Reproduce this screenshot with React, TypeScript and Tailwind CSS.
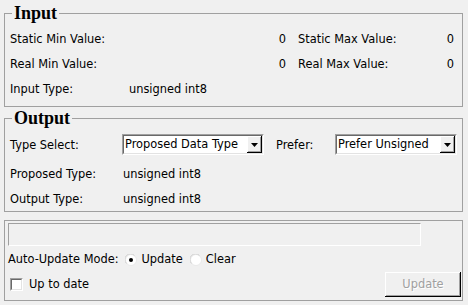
import React from 'react';

const ui = "font-['DejaVu_Sans',sans-serif] text-[11.4px] text-black";

function Group({ title, className = '', children }: { title?: string; className?: string; children: React.ReactNode }) {
  return (
    <fieldset className={`w-[459px] border border-[#a0a0a0] ${className}`}>
      {title && (
        <legend className="ml-[7px] px-[2px] font-['Liberation_Serif',serif] text-[18px] font-bold leading-[18px]">
          {title}
        </legend>
      )}
      {children}
    </fieldset>
  );
}

function Combo({ value, width }: { value: string; width: string }) {
  // classic sunken combobox with raised drop button
  return (
    <div className={`${width} h-[21px] border border-t-[#a0a0a0] border-l-[#a0a0a0] border-r-white border-b-white`}>
      <div className="flex h-full border border-t-[#696969] border-l-[#696969] border-r-[#e3e3e3] border-b-[#e3e3e3] bg-white">
        <div className="flex flex-1 items-center pl-[1px] pt-[1px] whitespace-nowrap overflow-hidden">{value}</div>
        <div className="flex w-[15px] items-center justify-center bg-[#f0f0f0] shadow-[inset_-1px_-1px_0_#000,inset_1px_1px_0_#fff,inset_-2px_-2px_0_#a0a0a0]">
          <svg width="7" height="4" viewBox="0 0 7 4" className="mt-[1px]">
            <path d="M0 0H7L3.5 4Z" fill="#000" />
          </svg>
        </div>
      </div>
    </div>
  );
}

function Radio({ checked }: { checked?: boolean }) {
  return (
    <svg width="12" height="12" viewBox="0 0 12 12">
      <circle cx="6" cy="6" r="5.5" fill="#fff" stroke="#e8e8e8" />
      <path d="M1.5 9.5A5 5 0 0 1 9.5 1.5" fill="none" stroke="#d0d0d0" />
      {checked && <circle cx="6" cy="6" r="2" fill="#000" />}
    </svg>
  );
}

export default function App() {
  return (
    <div className={`${ui} w-[468px] h-[305px] bg-[#f0f0f0] px-[4px] pt-[4px] flex flex-col`}>
      <Group title="Input" className="pb-[5px]">
        <div className="pt-[4px] pl-[5px] pr-[8px]">
          <div className="flex h-[25px] items-center pt-[2px]">
            <div className="w-[119px]">Static Min Value:</div>
            <div className="w-[157px] text-right">0</div>
            <div className="ml-[12px] flex-1">Static Max Value:</div>
            <div className="text-right">0</div>
          </div>
          <div className="flex h-[25px] items-center pt-[2px]">
            <div className="w-[119px]">Real Min Value:</div>
            <div className="w-[157px] text-right">0</div>
            <div className="ml-[12px] flex-1">Real Max Value:</div>
            <div className="text-right">0</div>
          </div>
          <div className="flex h-[25px] items-center pt-[2px]">
            <div className="w-[119px]">Input Type:</div>
            <div>unsigned int8</div>
          </div>
        </div>
      </Group>

      <Group title="Output" className="mt-[2px]">
        <div className="pl-[5px]">
          <div className="mt-[7px] flex h-[21px] items-center">
            <div className="w-[112px] pt-[2px]">Type Select:</div>
            <Combo value="Proposed Data Type" width="w-[142px]" />
            <div className="ml-[12px] w-[59px] pt-[2px]">Prefer:</div>
            <Combo value="Prefer Unsigned" width="w-[122px]" />
          </div>
          <div className="mt-[6px] flex h-[25px] items-center pt-[2px]">
            <div className="w-[113px]">Proposed Type:</div>
            <div>unsigned int8</div>
          </div>
          <div className="flex h-[25px] items-center pt-[2px]">
            <div className="w-[113px]">Output Type:</div>
            <div>unsigned int8</div>
          </div>
        </div>
      </Group>

      <Group className="mt-[8px] pb-[3px]">
        <div className="pl-[3px] pr-[1px]">
          <div className="mt-[2px] h-[23px] w-[413px] border border-t-[#a0a0a0] border-l-[#a0a0a0] border-r-white border-b-white bg-[#f0f0f0]" />
          <div className="flex h-[26px] items-center pt-[1px]">
            <span>Auto-Update Mode:</span>
            <span className="ml-[6px] flex items-center"><Radio checked /></span>
            <span className="ml-[5px]">Update</span>
            <span className="ml-[7px] flex items-center"><Radio /></span>
            <span className="ml-[4px]">Clear</span>
          </div>
          <div className="flex h-[25px] items-center">
            <div className="ml-[2px] h-[13px] w-[13px] border border-t-[#a0a0a0] border-l-[#a0a0a0] border-r-white border-b-white">
              <div className="h-full w-full border border-t-[#696969] border-l-[#696969] border-r-[#e3e3e3] border-b-[#e3e3e3] bg-white" />
            </div>
            <span className="ml-[6px] flex-1 pt-[1px]">Up to date</span>
            <button
              disabled
              className="h-[25px] w-[76px] bg-[#f0f0f0] pt-[1px] text-[#a0a0a0] [text-shadow:1px_1px_0_#fff] shadow-[inset_-1px_-1px_0_#000,inset_1px_1px_0_#fff,inset_-2px_-2px_0_#a0a0a0]"
            >
              Update
            </button>
          </div>
        </div>
      </Group>
    </div>
  );
}
